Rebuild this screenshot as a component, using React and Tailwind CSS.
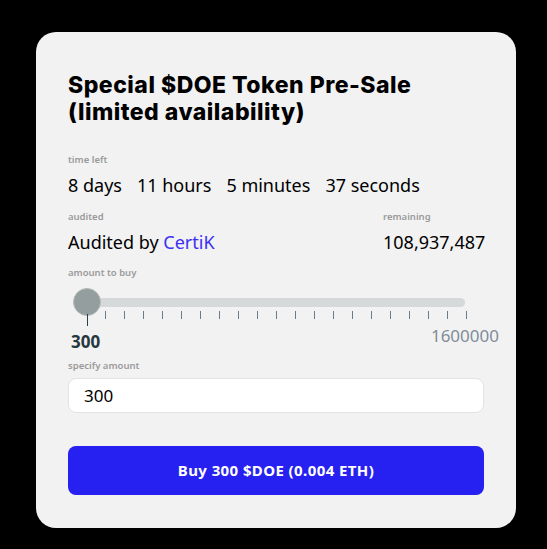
import { useState } from "react";

const ticks = Array.from({ length: 20 });

const Label = ({ children, className = "" }) => (
  <div className={`text-[9.5px] leading-[12px] font-semibold text-[#9a9a9a] ${className}`}>{children}</div>
);

const App = () => {
  const [amount, setAmount] = useState("300");

  return (
    <div className="w-[547px] h-[549px] bg-black pt-[32px] pl-[36px] font-['Noto_Sans',sans-serif]">
      <div className="w-[480px] h-[496px] bg-[#f2f2f2] rounded-[20px] px-[32px] pt-[40px]">
        <h1 className="font-['Inter',sans-serif] font-extrabold text-[23px] leading-[27px] text-black tracking-[0.5px]">
          Special $DOE Token Pre-Sale
          <br />
          (limited availability)
        </h1>

        {/* countdown */}
        <Label className="mt-[28px]">time left</Label>
        <div className="flex gap-[15px] text-[18px] leading-[26px] text-black mt-[6px]">
          <span>8 days</span>
          <span>11 hours</span>
          <span>5 minutes</span>
          <span>37 seconds</span>
        </div>

        <div className="flex justify-between mt-[13px]">
          <div>
            <Label>audited</Label>
            <div className="text-[18px] leading-[26px] text-black mt-[6px]">
              Audited by <span className="text-[#3b2ff2]">CertiK</span>
            </div>
          </div>
          <div className="w-[101px]">
            <Label>remaining</Label>
            <div className="text-[18px] leading-[26px] text-black mt-[6px]">108,937,487</div>
          </div>
        </div>

        {/* slider */}
        <Label className="mt-[12px]">amount to buy</Label>
        <div className="relative h-[48px]">
          <div className="absolute left-[19px] top-[19px] w-[378px] h-[9px] rounded-full bg-[#d5d9d9]" />
          <div className="absolute left-[5px] top-[9px] w-[28px] h-[28px] rounded-full bg-[#959e9e] border border-[#b4baba]" />
          <div className="absolute left-[19px] top-[35px] w-[1px] h-[12px] bg-[#2e4047]" />
          <div className="absolute left-[37px] top-[32px] flex gap-[18px]">
            {ticks.map((_, i) => (
              <div key={i} className="w-[1px] h-[8px] bg-[#6b7c88]" />
            ))}
          </div>
        </div>
        <div className="flex justify-between items-start h-[25px]">
          <div className="text-[17px] leading-[22px] font-bold text-[#26373d] pl-[3px] mt-[4px]">300</div>
          <div className="text-[17px] leading-[22px] text-[#7f8d9a] mr-[-15px] mt-[-2px]">1600000</div>
        </div>

        <Label className="mt-[8px]">specify amount</Label>
        <input
          value={amount}
          onChange={(e) => setAmount(e.target.value)}
          className="mt-[6px] w-full h-[35px] bg-white border border-[#e3e3e3] rounded-[8px] px-[15px] text-[17px] text-black outline-none"
        />

        <button className="mt-[33px] w-full h-[49px] bg-[#2621f1] rounded-[8px] text-white text-[15px] font-bold tracking-[0.4px]">
          Buy {amount} $DOE (0.004 ETH)
        </button>
      </div>
    </div>
  );
};

export default App;
